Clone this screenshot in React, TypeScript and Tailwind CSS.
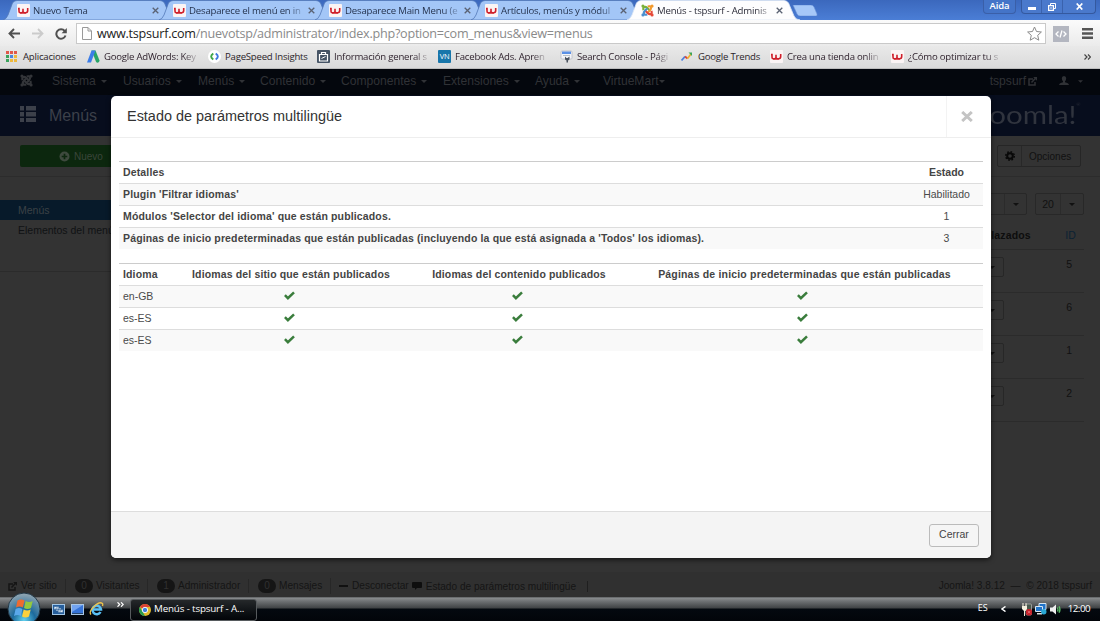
import type { ReactNode } from 'react';

const tabs = [
  { title: 'Nuevo Tema', active: false },
  { title: 'Desaparece el menú en in', active: false },
  { title: 'Desaparece Main Menu (e', active: false },
  { title: 'Artículos, menús y módul', active: false },
  { title: 'Menús - tspsurf - Adminis', active: true },
];

const menuItems = [
  { label: 'Sistema', width: 'w-[71px]' },
  { label: 'Usuarios', width: 'w-[75px]' },
  { label: 'Menús', width: 'w-[62px]' },
  { label: 'Contenido', width: 'w-[81px]' },
  { label: 'Componentes', width: 'w-[102px]' },
  { label: 'Extensiones', width: 'w-[92px]' },
  { label: 'Ayuda', width: 'w-[68px]' },
  { label: 'VirtueMart', width: 'w-[70px]', tight: true },
];

const details = [
  { name: "Plugin 'Filtrar idiomas'", value: 'Habilitado' },
  { name: "Módulos 'Selector del idioma' que están publicados.", value: '1' },
  {
    name: "Páginas de inicio predeterminadas que están publicadas (incluyendo la que está asignada a 'Todos' los idiomas).",
    value: '3',
  },
];

const languages = ['en-GB', 'es-ES', 'es-ES'];
const menuIds = ['5', '6', '1', '2'];

function WIcon() {
  return (
    <svg className="h-[13px] w-[13px] shrink-0" viewBox="0 0 13 13">
      <rect width="13" height="13" rx="1" fill="#fbf4f4" />
      <path
        d="M1 4.600h1v2.600q0 1.500 1.300 1.500h1.200q1.500 0 1.500-1.500V4.800v2.400q0 1.500 1.500 1.500h1.200q2 0 2-2.200V4"
        fill="none"
        stroke="#cf1f2b"
        strokeWidth="1.600"
      />
      <path d="M3 9.300h6" stroke="#cf1f2b" strokeWidth=".8" />
    </svg>
  );
}

function JoomlaIcon({ mono, className }: { mono?: string; className: string }) {
  const colors = mono ? [mono, mono, mono, mono] : ['#7ab13c', '#f29a2e', '#e5493a', '#4a8fd0'];
  return (
    <svg className={className} viewBox="0 0 16 16" fill="none" strokeWidth="2.6">
      <g stroke={colors[0]}>
        <circle cx="2.4" cy="2.6" r="1.9" fill={colors[0]} stroke="none" />
        <path d="M3.2 7.6Q2 4.6 4.2 3.8T8.2 5.2L10.6 7.6" />
      </g>
      <g stroke={colors[1]}>
        <circle cx="13.6" cy="2.6" r="1.9" fill={colors[1]} stroke="none" />
        <path d="M8.4 3.2Q11.4 2 12.2 4.2T10.8 8.2L8.4 10.6" />
      </g>
      <g stroke={colors[2]}>
        <circle cx="13.6" cy="13.4" r="1.9" fill={colors[2]} stroke="none" />
        <path d="M12.8 8.4Q14 11.4 11.8 12.2T7.8 10.8L5.4 8.4" />
      </g>
      <g stroke={colors[3]}>
        <circle cx="2.4" cy="13.4" r="1.9" fill={colors[3]} stroke="none" />
        <path d="M7.6 12.8Q4.6 14 3.8 11.8T5.2 7.8L7.6 5.4" />
      </g>
    </svg>
  );
}

function Caret({ className }: { className: string }) {
  return (
    <svg className={className} viewBox="0 0 6 3" fill="currentColor">
      <path d="M0 0h6L3 3z" />
    </svg>
  );
}

function ExternalIcon() {
  return (
    <svg className="h-[9px] w-[9px] shrink-0" viewBox="0 0 9 9" fill="none" stroke="currentColor" strokeWidth="1.5">
      <path d="M5 2H1v6h6V5M3.5 5.5l3.8-4" />
      <path d="M5.2 0H9v3.8z" fill="currentColor" stroke="none" />
    </svg>
  );
}

function Check() {
  return (
    <svg className="mb-[2px] mr-1 h-[9px] w-[11px]" viewBox="0 0 11 9" fill="none" stroke="#3a7d3c" strokeWidth="2.5">
      <path d="M.9 4.2l3 3L10 1.3" />
    </svg>
  );
}

function BrowserTab({ title, active }: { title: string; active: boolean }) {
  return (
    <div className={`relative flex w-[156px] shrink-0 items-center ${active ? 'z-10' : ''}`}>
      <svg className="absolute -left-[14px] top-0 h-[20px] w-[176px]" viewBox="0 0 176 20">
        <path
          d="M0 20Q3 19.500 5 15L9.500 3Q11 .5 14 .5H157Q160 .5 161.500 3L167 16Q169 20 173 20z"
          fill={active ? '#fdfdfe' : '#a3c6f7'}
          stroke={active ? '#dce6f5' : '#5379b8'}
          strokeWidth="0.8"
        />
      </svg>
      <div className="relative flex w-full items-center pt-px">
        {active ? <JoomlaIcon className="h-[13px] w-[13px] shrink-0" /> : <WIcon />}
        <span
          className={`ml-[3px] w-[114px] whitespace-nowrap text-[9.600px] leading-[16px] tracking-[-0.180px] [mask-image:linear-gradient(to_right,black_86%,transparent_104%)] ${active ? 'text-[#2b2b38]' : 'text-[#26344f]'}`}
        >
          {title}
        </span>
        <svg className="ml-[5px] h-[7px] w-[7px]" viewBox="0 0 7 7" stroke="#5a6273" strokeWidth="1.3">
          <path d="M.7.7l5.600 5.600M6.300.7L.7 6.300" />
        </svg>
      </div>
    </div>
  );
}

function Bookmark({ icon, width, fade, children }: { icon: ReactNode; width: string; fade?: boolean; children: string }) {
  return (
    <div className={`flex shrink-0 items-center ${width}`}>
      <span className="flex w-[17px] shrink-0 items-center">{icon}</span>
      <span
        className={`whitespace-nowrap ${fade ? '[mask-image:linear-gradient(to_right,black_86%,transparent_104%)]' : ''}`}
      >
        {children}
      </span>
    </div>
  );
}

function BrowserChrome() {
  return (
    <header className="font-['Open_Sans','Noto_Sans',sans-serif]">
      <div className="flex h-5 bg-linear-to-b from-[#3b68bd] to-[#4b7ed6] pl-[17px]">
        {tabs.map((tab) => (
          <BrowserTab key={tab.title} {...tab} />
        ))}
        <svg className="-ml-[5px] mt-[5px] h-[11px] w-[26px] shrink-0" viewBox="0 0 26 11">
          <path d="M1 0h18q2 0 3 2l3 7q.6 2-1 2H8q-2 0-3-2z" fill="#a6c8f8" stroke="#6b94d6" strokeWidth=".6" />
        </svg>
        <div className="ml-auto mr-1 flex h-[14px] items-center text-white">
          <span className="mr-[5px] flex h-[14px] w-[33px] items-center justify-center rounded-b border border-t-0 border-[#3a5fa8] bg-[#4474c8] text-[9.500px] font-semibold tracking-[-0.100px]">
            Aida
          </span>
          <div className="flex h-[14px] w-[75px] rounded-b border border-t-0 border-[#34599f] bg-[#4a79cc]">
            <span className="flex w-5 items-center justify-center border-r border-[#3a62ad]">
              <i className="mt-1 h-[3px] w-2 bg-white" />
            </span>
            <span className="flex w-[21px] items-center justify-center border-r border-[#3a62ad]">
              <svg className="h-2 w-2" viewBox="0 0 8 8" fill="none" stroke="white">
                <path d="M2.500 2V.5h5v5H6" />
                <path d="M.6 2.600h4.800v4.800H.6z" strokeWidth="1.300" />
                <path d="M2.500 4.500h1v1h-1z" strokeWidth=".5" />
              </svg>
            </span>
            <span className="flex grow items-center justify-center">
              <svg className="h-[7px] w-[7px]" viewBox="0 0 7 7" stroke="white" strokeWidth="1.700">
                <path d="M.7.5l5.600 6M6.300.5l-5.600 6" />
              </svg>
            </span>
          </div>
        </div>
      </div>

      {/* Address bar */}
      <div className="flex h-[26px] items-center bg-linear-to-b from-[#fbfbfb] to-[#ebebeb] pl-2 pr-[7px] pt-px">
        <svg className="h-[11px] w-[12px]" viewBox="0 0 12 11" fill="none" stroke="#505050" strokeWidth="1.900">
          <path d="M12 5.500H1.500M6 1L1.500 5.500 6 10" />
        </svg>
        <svg className="ml-[12px] h-[11px] w-[12px]" viewBox="0 0 12 11" fill="none" stroke="#cbcbcb" strokeWidth="1.800">
          <path d="M0 5.500h10.500M6 1l4.500 4.500L6 10" />
        </svg>
        <svg className="ml-[11px] h-[12px] w-[12px]" viewBox="0 0 12 12" fill="none" stroke="#505050" strokeWidth="2">
          <path d="M9.700 3A4.700 4.700 0 1 0 10.500 7.500" />
          <path d="M11.800 0v5.200H6.600z" fill="#505050" stroke="none" />
        </svg>
        <div className="ml-[9px] flex h-[21px] w-[970px] items-center border border-[#c9c9c9] bg-white pl-[5px] pr-[3px]">
          <svg className="h-[13px] w-[10px]" viewBox="0 0 10 13" fill="#fdfdfd" stroke="#999">
            <path d="M.5.5H6l3.500 3.500v8.500h-9zM6 .5V4h3.500" />
          </svg>
          <span className="ml-[5px] whitespace-nowrap text-[12.600px] leading-[18px] tracking-[-0.250px] text-[#8a8a8a]">
            <span className="text-[#222]">www.tspsurf.com</span>/nuevotsp/administrator/index.php?option=com_menus&amp;view=menus
          </span>
          <svg className="ml-auto h-[15px] w-[15px]" viewBox="0 0 15 15" fill="white" stroke="#8b8b8b">
            <path d="M7.500 1l2 4.500 4.900.5-3.700 3.300 1.100 4.900-4.300-2.500-4.300 2.500 1.100-4.900L.6 6l4.900-.5z" />
          </svg>
        </div>
        <span className="ml-[7px] flex h-4 w-4 items-center justify-center bg-[#b3b6c0]">
          <svg className="h-2 w-3" viewBox="0 0 12 8" fill="none" stroke="white" strokeWidth="1.300">
            <path d="M3.500 1.500L1 4l2.500 2.500M8.500 1.500L11 4 8.500 6.500M7 .5l-2 7" />
          </svg>
        </span>
        <svg className="ml-auto h-[11px] w-[11px]" viewBox="0 0 11 11" fill="#555">
          <path d="M0 0h11v2.500H0zM0 4.250h11v2.500H0zM0 8.500h11V11H0z" />
        </svg>
      </div>

      {/* Bookmarks */}
      <div className="flex h-[23px] items-center border-b border-[#bdbdbd] bg-linear-to-b from-[#e9e9e9] to-[#dadada] pl-[6px] text-[9.600px] tracking-[-0.220px] text-[#2c1f2a]">
        <Bookmark
          width="w-[81px]"
          icon={
            <svg className="h-[11px] w-[11px]" viewBox="0 0 11 11">
              <path d="M0 0h3v3H0zM4 0h3v3H4zM8 0h3v3H8z" fill="#e0584b" />
              <path d="M0 4h3v3H0z" fill="#3aa35c" />
              <path d="M4 4h3v3H4z" fill="#4b84e0" />
              <path d="M8 4h3v3H8zM4 8h3v3H4zM8 8h3v3H8z" fill="#efb93c" />
              <path d="M0 8h3v3H0z" fill="#3aa35c" />
            </svg>
          }
        >
          Aplicaciones
        </Bookmark>
        <Bookmark
          fade
          width="w-[121px]"
          icon={
            <svg className="h-[13px] w-[13px]" viewBox="0 0 13 13">
              <path d="M4.500.5h4l4 10q0 2-1.800 2.200-1.200 0-1.800-1.200z" fill="#27a567" />
              <path d="M4.500.5h4L4 12.500H0z" fill="#3b7de8" />
            </svg>
          }
        >
          Google AdWords: Key
        </Bookmark>
        <Bookmark
          width="w-[109px]"
          icon={
            <svg className="h-[13px] w-[13px]" viewBox="0 0 13 13" fill="none">
              <circle cx="6.500" cy="6.500" r="6.500" fill="white" />
              <path d="M5.300 3.500Q1 6.500 5.300 9.500" stroke="#3fa648" strokeWidth="1.900" />
              <path d="M7.700 3.500q4.300 3 0 6" stroke="#3e79df" strokeWidth="1.900" />
            </svg>
          }
        >
          PageSpeed Insights
        </Bookmark>
        <Bookmark
          fade
          width="w-[121px]"
          icon={
            <svg className="h-[13px] w-[13px]" viewBox="0 0 13 13">
              <rect width="13" height="13" rx="1" fill="#465465" />
              <path d="M2.500 4.500h8V11h-8zM4.500 4V2.500h4V4" fill="none" stroke="white" strokeWidth="1.200" />
              <path d="M4.500 8.500l4-2" stroke="white" />
            </svg>
          }
        >
          Información general s
        </Bookmark>
        <Bookmark
          fade
          width="w-[122px]"
          icon={
            <span className="flex h-[13px] w-[13px] items-center justify-center rounded-[1px] bg-[#1876aa] text-[7.500px] tracking-tighter text-white">
              VN
            </span>
          }
        >
          Facebook Ads. Apren
        </Bookmark>
        <Bookmark
          fade
          width="w-[121px]"
          icon={
            <svg className="h-[13px] w-[13px]" viewBox="0 0 13 13">
              <rect x="1" y="1" width="11" height="8" rx="1" fill="#f4f5f8" stroke="#b3b6c0" strokeWidth=".7" />
              <path d="M2 1.500h9v2.500H2z" fill="#5b91e6" />
              <path d="M3 5h7v1H3z" fill="#b8c0cc" />
              <path d="M5 6.500l1.500 1.500h1L9.500 6.500v3l-1.500 1v2H6.500v-2L5 9.500z" fill="#4a525e" />
            </svg>
          }
        >
          Search Console - Pági
        </Bookmark>
        <Bookmark
          width="w-[89px]"
          icon={
            <svg className="h-[11px] w-[12px]" viewBox="0 0 12 11" fill="none" strokeWidth="1.800">
              <path d="M.5 9.500L4 5.500" stroke="#4a7de0" />
              <path d="M4 5.500l2.500 2" stroke="#d9483b" />
              <path d="M6.500 7.500L10 3" stroke="#efb02f" />
              <path d="M7.500 1.500H11v3.500z" fill="#3ba457" />
            </svg>
          }
        >
          Google Trends
        </Bookmark>
        <Bookmark fade width="w-[121px]" icon={<WIcon />}>
          Crea una tienda onlin
        </Bookmark>
        <Bookmark fade width="w-[121px]" icon={<WIcon />}>
          ¿Cómo optimizar tu s
        </Bookmark>
        <svg className="ml-auto mr-[9px] h-[6px] w-[7px]" viewBox="0 0 7 6" fill="none" stroke="#444" strokeWidth="1.200">
          <path d="M.5.500L3 3 .5 5.500M4 .5L6.500 3 4 5.500" />
        </svg>
      </div>
    </header>
  );
}

function AdminPage() {
  return (
    <div className="flex h-[528px] flex-col bg-[#333]">
      <nav className="flex h-[26px] shrink-0 items-start bg-[#04070d] pl-[20px] text-[12.100px] leading-[25px] text-[#303236]">
        <JoomlaIcon mono="#333539" className="mr-[19px] mt-[5px] h-[13px] w-[13px]" />
        {menuItems.map(({ label, width, tight }) => (
          <span key={label} className={`flex shrink-0 items-center ${width} ${tight ? '' : 'gap-[5px]'}`}>
            {label}
            <Caret className="h-[3px] w-[6px]" />
          </span>
        ))}
        <span className="ml-auto flex items-center gap-[2px]">
          tspsurf <ExternalIcon />
        </span>
        <svg className="ml-[22px] mt-[7px] h-[9px] w-[10px]" viewBox="0 0 10 9" fill="currentColor">
          <path d="M5 0q2.300 0 2.200 2.500Q7 4.500 6 5.300v.9q3.500.600 4 2.800H0q.5-2.200 4-2.800v-.9Q3 4.500 2.800 2.500 2.700 0 5 0z" />
        </svg>
        <Caret className="ml-[9px] mr-[17px] mt-[11px] h-[3px] w-[5px]" />
      </nav>

      <div className="flex h-[41px] shrink-0 items-center bg-[#070d1d] pl-5 text-[#3c404a]">
        <svg className="mb-1 h-4 w-4" viewBox="0 0 16 16" fill="currentColor">
          <path d="M0 0h4v4.500H0zM6 0h10v4.500H6zM0 6h4v4.500H0zM6 6h10v4.500H6zM0 12h4v4H0zM6 12h10v4H6z" />
        </svg>
        <span className="ml-[13px] text-[16px] leading-none">Menús</span>
        <span className="mb-[3px] ml-auto mr-[20px] flex origin-right scale-x-[1.18] items-start font-['Lato'] text-[25px] leading-none text-[#30343e]">
          Joomla!
          <sup className="mt-[3px] text-[4px] leading-none">®</sup>
        </span>
      </div>

      <div className="flex h-[41px] shrink-0 items-center justify-between border-b border-[#2c2c2c] pl-5 pr-[19px] text-[10px]">
        <span className="flex h-[22px] w-[120px] items-center gap-[4px] rounded-[2px] bg-[#0c270e] pl-[39px] text-[#3a463a]">
          <svg className="h-[11px] w-[11px]" viewBox="0 0 11 11">
            <circle cx="5.500" cy="5.500" r="5" fill="#3e4a3e" />
            <path d="M5.500 2.700v5.600M2.700 5.500h5.600" stroke="#0c270e" strokeWidth="1.700" />
          </svg>
          Nuevo
        </span>
        <span className="flex h-[22px] w-[84px] items-center rounded-[2px] border border-[#262626] text-[#111]">
          <span className="flex h-full w-[24px] items-center justify-center border-r border-[#282828]">
            <svg className="h-[10px] w-[10px]" viewBox="0 0 10 10" fill="none" stroke="#080808">
              <circle cx="5" cy="5" r="2.800" strokeWidth="2" />
              <circle cx="5" cy="5" r="4.300" strokeWidth="1.400" strokeDasharray="1.700 1.677" />
            </svg>
          </span>
          <span className="grow pl-[7px]">Opciones</span>
        </span>
      </div>

      <div className="flex grow">
        <aside className="h-[95px] w-[200px] border-b border-[#2b2b2b] pt-[23px] text-[10.500px] leading-[20px]">
          <div className="bg-[#071a2a] pl-[18px] text-[#3b4145]">Menús</div>
          <div className="pl-[18px] text-[#101214]">Elementos del menú</div>
        </aside>
        <div className="ml-auto w-[135px] pr-4 text-[10.500px] text-[#111]">
          <div className="mt-4 flex justify-end gap-[8px]">
            <span className="flex h-[22px] w-[60px] shrink-0 justify-end rounded-[2px] border border-[#282828]">
              <span className="flex w-[22px] items-center justify-center border-l border-[#2b2b2b]">
                <Caret className="h-[3px] w-[6px]" />
              </span>
            </span>
            <span className="flex h-[22px] w-[49px] shrink-0 rounded-[2px] border border-[#282828] leading-[20px]">
              <span className="grow text-center">20</span>
              <span className="flex w-[23px] items-center justify-center border-l border-[#2b2b2b]">
                <Caret className="h-[3px] w-[6px]" />
              </span>
            </span>
          </div>
          <div className="flex h-[35px] items-center justify-between border-b border-[#2a2a2a] pr-[8px] pt-[8px] font-bold tracking-[0.140px] text-[#0d0d0d]">
            <span>Desplazados</span>
            <span className="font-normal text-[#0b2234]">ID</span>
          </div>
          {menuIds.map((id) => (
            <div key={id} className="flex h-[43px] items-start justify-between border-b border-[#2b2b2b] pl-[15px] pr-[12px] pt-[7px]">
              <span className="flex h-[20px] w-[24px] items-center justify-center rounded-[2px] border border-[#272727]">
                <Caret className="h-[3px] w-[6px]" />
              </span>
              <span>{id}</span>
            </div>
          ))}
        </div>
      </div>

      <footer className="flex h-[25px] shrink-0 items-center bg-[#303030] pl-[8px] pr-[8px] pt-[3px] text-[10.100px] whitespace-nowrap text-[#151515]">
        <ExternalIcon />
        <span className="ml-[4px] w-[44px]">Ver sitio</span>
        <FooterCount count="0" label="Visitantes" width="w-[82px]" />
        <FooterCount count="1" label="Administrador" width="w-[101px]" />
        <FooterCount count="0" label="Mensajes" width="w-[82px]" />
        <span className="flex items-center border-l border-[#272727] pl-[8px]">
          <i className="mr-[4px] h-[2px] w-[9px] bg-[#111]" />
          Desconectar
        </span>
        <svg className="ml-[3px] h-[8px] w-[10px]" viewBox="0 0 10 8" fill="#0e0e0e">
          <path d="M1 0h8q1 0 1 1v4q0 1-1 1H5L3 8V6H1Q0 6 0 5V1q0-1 1-1z" />
        </svg>
        <span className="ml-[4px] border-r border-[#1f1f1f] pr-[11px] leading-[11px]">Estado de parámetros multilingüe</span>
        <span className="mb-px ml-auto">Joomla! 3.8.12 &nbsp;—&nbsp; © 2018 tspsurf</span>
      </footer>
    </div>
  );
}

function FooterCount({ count, label, width }: { count: string; label: string; width: string }) {
  return (
    <span className={`flex h-[14px] shrink-0 items-center border-l border-[#272727] pl-[9px] ${width}`}>
      <span className="mr-[3px] flex h-[14px] w-[18px] items-center justify-center rounded-full bg-[#151515] text-[#303030]">
        {count}
      </span>
      {label}
    </span>
  );
}

function MultilangModal() {
  return (
    <div className="absolute left-[111px] top-[96px] flex h-[462px] w-[880px] flex-col overflow-hidden rounded-[5px] bg-white text-[10.500px] text-[#4a4a4a] shadow-[0_2px_5px_rgba(0,0,0,0.6)]">
      <div className="flex h-[42px] shrink-0 border-b border-[#eee]">
        <h3 className="grow pl-4 text-[14.450px] leading-[41px] text-[#333]">Estado de parámetros multilingüe</h3>
        <button className="flex w-[45px] items-center border-l border-[#f3f3f3] pl-[14px]">
          <svg className="h-[11px] w-[12px]" viewBox="0 0 12 11" stroke="#c4c4c4" strokeWidth="3">
            <path d="M1.200 1l9.600 9M10.800 1l-9.600 9" />
          </svg>
        </button>
      </div>

      <div className="grow px-2 pt-[23px]">
        <div className="mb-[14px]">
          <div className="flex h-[22px] items-center border-t border-[#ccc] pl-1 font-bold text-[#444]">
            <span className="grow tracking-[0.140px]">Detalles</span>
            <span className="w-[73px] text-center">Estado</span>
          </div>
          {details.map(({ name, value }) => (
            <div key={value} className="flex h-[22px] items-center border-t border-[#ddd] pl-1 odd:bg-white even:bg-[#f9f9f9]">
              <span className="grow font-bold tracking-[0.146px] text-[#444]">{name}</span>
              <span className="w-[73px] text-center">{value}</span>
            </div>
          ))}
        </div>

        <div className="grid h-[22px] grid-cols-[65px_214px_242px_329px] items-center border-t border-[#ccc] font-bold tracking-[0.140px] whitespace-nowrap text-[#444]">
          <span className="pl-1">Idioma</span>
          <span className="text-center">Idiomas del sitio que están publicados</span>
          <span className="text-center">Idiomas del contenido publicados</span>
          <span className="text-center tracking-[0.180px]">Páginas de inicio predeterminadas que están publicadas</span>
        </div>
        {languages.map((lang, i) => (
          <div
            key={i}
            className={`grid h-[22px] grid-cols-[65px_214px_242px_329px] items-center justify-items-center border-t border-[#ddd] ${i % 2 ? '' : 'bg-[#f9f9f9]'}`}
          >
            <span className="justify-self-start pl-1">{lang}</span>
            <Check />
            <Check />
            <Check />
          </div>
        ))}
      </div>

      <div className="flex h-[47px] shrink-0 items-center justify-end border-t border-[#ddd] bg-[#f4f4f4] pr-3">
        <button className="h-[23px] w-[50px] rounded-[3px] border border-[#bbb] bg-[#f5f5f5] text-[10.500px] text-[#444]">Cerrar</button>
      </div>
    </div>
  );
}

function Taskbar() {
  return (
    <div className="relative flex h-6 shrink-0 items-center bg-[linear-gradient(#4b4e50_0px,#8a8d8f_1px,#707375_4px,#3f4244_11px,#04090f_12px,#020509_24px)] font-['Open_Sans','Noto_Sans',sans-serif] text-[9.800px] text-white">
      <svg className="absolute left-[7px] top-[-5px] h-[34px] w-[34px]" viewBox="0 0 34 34">
        <defs>
          <radialGradient id="orb" cx="50%" cy="85%" r="80%">
            <stop offset="0" stopColor="#5fd0ee" />
            <stop offset=".45" stopColor="#1c6a9c" />
            <stop offset="1" stopColor="#8ba2b0" />
          </radialGradient>
        </defs>
        <circle cx="17" cy="17" r="16" fill="url(#orb)" stroke="#243948" />
        <path d="M10.500 8.500q3.500-2 7 0l-1.700 7q-3.300-2-6.800 0z" fill="#ee6b30" />
        <path d="M18.700 9q3.300 2 7 0L24 16q-3.500 2-7 0z" fill="#93c83f" />
        <path d="M8.600 17q3.300-2 6.800 0L13.800 24q-3.300-2-6.800 0z" fill="#5aa8ea" />
        <path d="M16.700 17.500q3.300 2 7 0l-1.700 7q-3.500 2-7 0z" fill="#fcd03b" />
      </svg>
      <svg className="ml-[52px] h-[11px] w-[13px]" viewBox="0 0 13 11">
        <rect x=".5" y=".5" width="12" height="10" fill="#265e9c" stroke="#a2c5e4" />
        <path d="M2 2.500h5v3H2zM4 4h5v3H4zM6 5.500h5v3H6z" fill="#dcebf8" stroke="#315f94" strokeWidth=".6" />
      </svg>
      <svg className="ml-[6px] h-[11px] w-[13px]" viewBox="0 0 13 11">
        <rect x=".5" y=".5" width="12" height="10" fill="#3573d8" stroke="#a8c6e4" />
        <path d="M1 1h11L1 8z" fill="#72a3ef" />
        <path d="M1 9h11v1H1z" fill="#26466e" />
      </svg>
      <svg className="ml-[5px] h-[14px] w-[15px]" viewBox="0 0 15 14" fill="none">
        <path d="M11.500 10A4.300 4.300 0 1 1 12 7.500H4.500" stroke="#5ac0f5" strokeWidth="2.500" />
        <path d="M2 12.500Q-.5 10 5 4.500T13.500 1.500Q14 2 13.500 4" stroke="#edc34c" strokeWidth="1.300" />
      </svg>
      <svg className="mb-[9px] ml-[13px] h-[5px] w-[7px]" viewBox="0 0 7 5" fill="none" stroke="white" strokeWidth="1.200">
        <path d="M.5.3l2.200 2.200L.5 4.700M4 .3l2.200 2.200L4 4.700" />
      </svg>
      <div className="ml-[6px] mt-px flex h-[22px] w-[127px] items-center rounded-[3px] border border-[#575b5e] bg-linear-to-b from-[#25282a] to-[#030508] pl-[8px]">
        <svg className="h-[12px] w-[12px] shrink-0" viewBox="0 0 12 12">
          <circle cx="6" cy="6" r="6" fill="#e0b92b" />
          <path d="M6 6L.8 3A6 6 0 0 1 11.200 3H6z" fill="#dc4235" />
          <path d="M.8 3L6 12A6 6 0 0 1 .8 3z" fill="#299b51" />
          <circle cx="6" cy="6" r="2.700" fill="#4080df" stroke="white" strokeWidth=".9" />
        </svg>
        <span className="ml-[3px] whitespace-nowrap tracking-[-0.150px]">Menús - tspsurf - A...</span>
      </div>
      <div className="ml-auto flex items-center pr-[10px]">
        <span className="mb-[3px] text-[9px]">ES</span>
        <svg className="ml-[13px] h-[6px] w-[5px]" viewBox="0 0 5 6" fill="none" stroke="white" strokeWidth="1.500">
          <path d="M4.500.5L1 3l3.500 2.500" />
        </svg>
        <svg className="ml-[15px] h-[13px] w-[11px]" viewBox="0 0 11 13">
          <rect x="5" y="1" width="5.500" height="11" rx="1" fill="#49584c" stroke="#ccc" strokeWidth=".6" />
          <path d="M1 3h5v3L4.500 8H4v5H3V8l-2-2zM1.500 0h1v3h-1zM4.500 0h1v3h-1z" fill="#f5f0de" />
          <rect x="5" y="6" width="6" height="6.500" rx="2.500" fill="#c8202a" />
          <path d="M6.800 8l2.400 2.400M9.200 8l-2.400 2.400" stroke="#e88" strokeWidth=".7" />
        </svg>
        <svg className="ml-[3px] h-[12px] w-[12px]" viewBox="0 0 12 12">
          <path d="M4 .5h7v6H4z" fill="#1f73c9" stroke="#d8e6f2" />
          <path d="M.5 3.500h7v5h-7z" fill="#1f73c9" stroke="#d8e6f2" />
          <path d="M2 10h5v1.500H2z" fill="#ddd" />
          <circle cx="8.800" cy="8.800" r="2.700" fill="#2aa7d4" />
        </svg>
        <svg className="ml-[3px] h-[11px] w-[12px]" viewBox="0 0 12 11" fill="none">
          <path d="M0 3.500h2.500L6 .5v10l-3.500-3H0z" fill="#eee" />
          <path d="M7.500 3.500q1 2 0 4M9 2.200q2 3.300 0 6.600" stroke="#5cc068" strokeWidth="1.200" />
        </svg>
        <span className="ml-[6px] leading-none tracking-[-0.550px]">12:00</span>
      </div>
    </div>
  );
}

export default function App() {
  return (
    <div className="relative flex h-[621px] w-[1100px] flex-col overflow-hidden bg-[#333] font-['Liberation_Sans',Arial,sans-serif]">
      <BrowserChrome />
      <AdminPage />
      <MultilangModal />
      <Taskbar />
    </div>
  );
}
